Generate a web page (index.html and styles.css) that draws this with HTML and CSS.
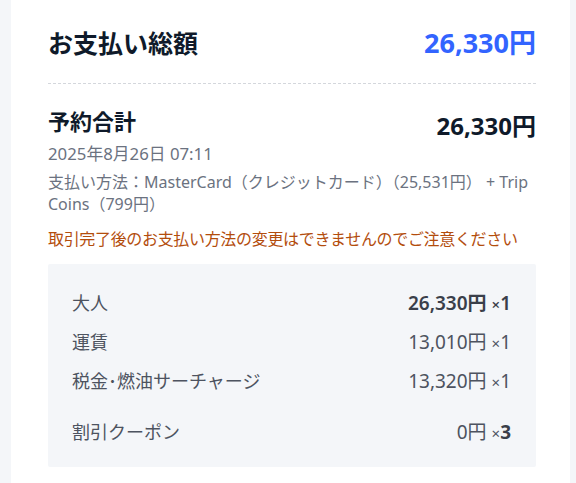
FILE: index.html
```html
<!DOCTYPE html>
<html lang="ja">
<head>
<meta charset="utf-8">
<link rel="stylesheet" href="styles.css">
</head>
<body>
<div class="page">
  <div class="card">
    <div class="total-row">
      <div class="total-label">お支払い総額</div>
      <div class="total-price">26,330円</div>
    </div>
    <div class="divider"></div>
    <div class="booking-row">
      <div class="booking-label">予約合計</div>
      <div class="booking-price">26,330円</div>
    </div>
    <div class="date">2025年8月26日 07:11</div>
    <div class="method">支払い方法：MasterCard（クレジットカード）（25,531円） + Trip Coins（799円）</div>
    <div class="warning">取引完了後のお支払い方法の変更はできませんのでご注意ください</div>
    <div class="detail">
      <div class="line"><span class="name">大人</span><span class="amt strong">26,330円 <span class="mult">×</span>1</span></div>
      <div class="line"><span class="name">運賃</span><span class="amt">13,010円 <span class="mult">×</span>1</span></div>
      <div class="line"><span class="name">税金･燃油サーチャージ</span><span class="amt">13,320円 <span class="mult">×</span>1</span></div>
      <div class="line coupon"><span class="name">割引クーポン</span><span class="amt">0円 <span class="mult">×</span><b>3</b></span></div>
    </div>
  </div>
</div>
</body>
</html>
```
FILE: styles.css
```css
html, body {
  margin: 0;
  padding: 0;
  background: #f4f6f9;
}
body {
  font-family: "Noto Sans", "Noto Sans CJK JP", sans-serif;
  color: #0f1a2a;
}
.page {
  padding: 0 6px 0 11px;
  height: 483px;
  overflow: hidden;
}
.card {
  background: #ffffff;
  padding: 26px 34px 30px 37px;
  min-height: 460px;
}
.total-row {
  display: flex;
  justify-content: space-between;
  align-items: center;
  height: 34px;
}
.total-label {
  font-size: 25px;
  font-weight: 700;
  line-height: 34px;
  color: #0f1a2a;
}
.total-price {
  font-size: 27px;
  font-weight: 700;
  line-height: 34px;
  color: #3264ff;
}
.divider {
  margin-top: 23px;
  border-top: 1px dashed #d4d7dc;
}
.booking-row {
  display: flex;
  justify-content: space-between;
  align-items: flex-start;
  margin-top: 23px;
}
.booking-label {
  font-size: 22px;
  font-weight: 700;
  line-height: 29px;
}
.booking-price {
  font-size: 24px;
  font-weight: 700;
  line-height: 30px;
  margin-top: 4px;
}
.date {
  font-size: 16.8px;
  line-height: 23px;
  color: #6b7280;
  margin-top: 1px;
}
.method {
  font-size: 16px;
  line-height: 22px;
  color: #6b7280;
  margin-top: 6px;
}
.warning {
  font-size: 16px;
  line-height: 22px;
  letter-spacing: -0.33px;
  color: #b34d0d;
  margin-top: 13px;
}
.detail {
  margin-top: 14px;
  background: #f4f6f9;
  border-radius: 2px;
  padding: 18px 25px 17px 24px;
}
.line {
  display: flex;
  justify-content: space-between;
  align-items: center;
  height: 39px;
  font-size: 18px;
  color: #4d5360;
}
.line.coupon {
  margin-top: 12px;
}
.amt {
  font-size: 19px;
  color: #4d5360;
}
.amt.strong {
  color: #3a3f4a;
  font-weight: 600;
}
.mult {
  font-size: 15px;
}
.amt b {
  font-weight: 700;
  color: #3a3f4a;
}
```
